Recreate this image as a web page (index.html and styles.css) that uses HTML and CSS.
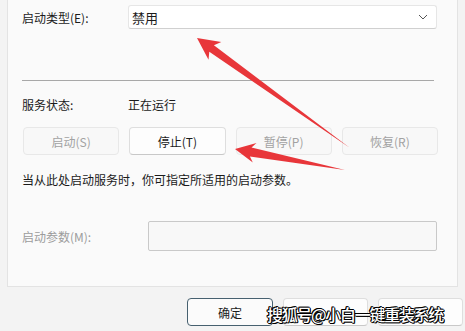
FILE: index.html
```html
<!DOCTYPE html>
<html lang="zh-CN">

<head>
	<meta charset="utf-8">
	<title>服务属性</title>
	<link rel="stylesheet" href="styles.css">
</head>

<body>
	<div class="panel">
		<div class="row row_type">
			<span class="label">启动类型(E):</span>
			<div class="select">
				<span>禁用</span>
				<svg class="chevron" width="10" height="6" viewBox="0 0 10 6"><path d="M1 1 L5 5 L9 1" fill="none" stroke="#555" stroke-width="1"/></svg>
			</div>
		</div>
		<hr class="sep">
		<div class="row row_status">
			<span class="label">服务状态:</span>
			<span>正在运行</span>
		</div>
		<div class="buttons">
			<span class="btn off">启动(S)</span>
			<span class="btn">停止(T)</span>
			<span class="btn off">暂停(P)</span>
			<span class="btn off">恢复(R)</span>
		</div>
		<p class="hint">当从此处启动服务时，你可指定所适用的启动参数。</p>
		<div class="row row_param">
			<span class="label label_param off_text">启动参数(M):</span>
			<span class="input"></span>
		</div>
	</div>
	<div class="footer">
		<span class="btn btn_main">确定</span>
		<span class="btn btn_foot"></span>
		<span class="btn btn_foot"></span>
	</div>

	<svg class="arrows" width="465" height="331" viewBox="0 0 465 331">
		<polygon fill="#e8363a" points="197,38 221.3,41.9 213.9,45.2 350,148 209.3,51.7 208.5,59.8"/>
		<polygon fill="#e8363a" points="235,149 256.5,142.9 251.5,147.6 345,170 249.9,156.4 252.8,162.5"/>
	</svg>
	<div class="mark">搜狐号@小白一键重装系统</div>
</body>

</html>
```

FILE: styles.css
```css
body {
	margin:0;
	width:465px;
	height:331px;
	overflow:hidden;
	position:relative;
	background-color:#f3f3f3;
	font-family:"Noto Sans CJK SC", "Noto Sans", sans-serif;
	font-size:12px;
	color:#1b1b1b;
}

.panel {
	margin-left:7px;
	width:451px;
	height:287px;
	box-sizing:border-box;
	background-color:#fafafa;
	border:1px solid #e3e3e3;
	border-top:none;
	padding:5px 20px 0 14px;
}

.row {
	display:flex;
	align-items:center;
}

.label {
	width:106px;
	flex:none;
}

.select {
	width:310px;
	height:24px;
	box-sizing:border-box;
	background-color:#fff;
	border:1px solid #e6e6e6;
	border-bottom-color:#d0d0d0;
	border-radius:3px;
	display:flex;
	align-items:center;
	justify-content:space-between;
	padding:0 8px 0 3px;
	font-size:13px;
}

.sep {
	margin:51px 3px 0 0;
	border:none;
	border-top:1px solid #a8a8a8;
	height:0;
}

.row_status {
	margin-top:14px;
	height:18px;
}

.buttons {
	display:grid;
	grid-template-columns:repeat(4, 1fr);
	column-gap:10px;
	margin:14px 0 0 1px;
	width:415px;
}

.btn {
	height:28px;
	box-sizing:border-box;
	display:flex;
	align-items:center;
	justify-content:center;
	background-color:#fdfdfd;
	border:1px solid #dedede;
	border-bottom-color:#c8c8c8;
	border-radius:4px;
}

.btn.off {
	background-color:#f8f8f8;
	border-color:#e8e8e8;
	color:#a2a2a2;
}

.hint {
	margin:16px 0 0;
	line-height:18px;
}

.row_param {
	margin-top:32px;
}

.label_param {
	width:126px;
}

.off_text {
	color:#9c9c9c;
}

.input {
	width:291px;
	height:30px;
	box-sizing:border-box;
	background-color:#f8f8f8;
	border:1px solid #c9c9c9;
	border-radius:2px;
}

.footer {
	display:flex;
	gap:10px;
	margin:11px 0 0 187px;
}

.btn_main {
	width:86px;
	border:1px solid #46606f;
	background-color:#fbfbfb;
}

.btn_foot {
	width:85px;
}

.arrows {
	position:absolute;
	left:0;
	top:0;
	pointer-events:none;
}

.mark {
	position:absolute;
	left:267px;
	top:302px;
	font-size:16px;
	font-weight:500;
	color:#fff;
	letter-spacing:-1.3px;
	text-shadow:1px 0 0 #000, -1px 0 0 #000, 0 1px 0 #000, 0 -1px 0 #000, 1px 1px 0 #000, -1px -1px 0 #000;
}
```
